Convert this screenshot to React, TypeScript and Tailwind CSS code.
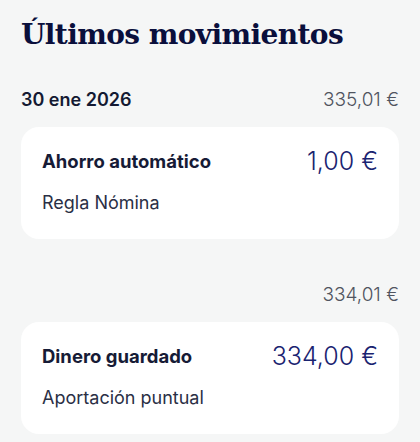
import React from 'react';

interface Movement {
  title: string;
  subtitle: string;
  amount: string;
}

interface Group {
  date?: string;
  balance: string;
  movement: Movement;
}

const groups: Group[] = [
  {
    date: '30 ene 2026',
    balance: '335,01 €',
    movement: { title: 'Ahorro automático', subtitle: 'Regla Nómina', amount: '1,00 €' },
  },
  {
    balance: '334,01 €',
    movement: { title: 'Dinero guardado', subtitle: 'Aportación puntual', amount: '334,00 €' },
  },
];

function MovementCard({ movement }: { movement: Movement }) {
  return (
    <div className="flex flex-col gap-[18px] rounded-[18px] bg-white px-[21px] pt-[22px] pb-[24px]">
      <div className="flex items-center justify-between">
        <span className="text-[18.5px] leading-6 font-bold text-[#161b36]">{movement.title}</span>
        <span className="text-[25px] leading-6 font-light text-[#1a2370]">{movement.amount}</span>
      </div>
      <span className="text-[18px] leading-6 text-[#2a2f45]">{movement.subtitle}</span>
    </div>
  );
}

export default function App() {
  return (
    <div className="min-h-[442px] bg-[#f5f6f6] px-[21px] pt-[17px] font-['Inter',sans-serif]">
      <h1 className="font-['DejaVu_Serif',serif] text-[28px] leading-9 font-bold tracking-[-0.6px] text-[#0a0f3c]">
        Últimos movimientos
      </h1>
      <div className="mt-[35px] flex flex-col gap-[44px]">
        {groups.map((g, i) => (
          <div key={i} className="flex flex-col gap-[15px]">
            <div className="flex items-center justify-between">
              <span className="text-[18px] leading-6 font-semibold text-[#141a33]">{g.date ?? ''}</span>
              <span className="text-[19px] leading-6 font-light text-[#50545f]">{g.balance}</span>
            </div>
            <MovementCard movement={g.movement} />
          </div>
        ))}
      </div>
    </div>
  );
}
